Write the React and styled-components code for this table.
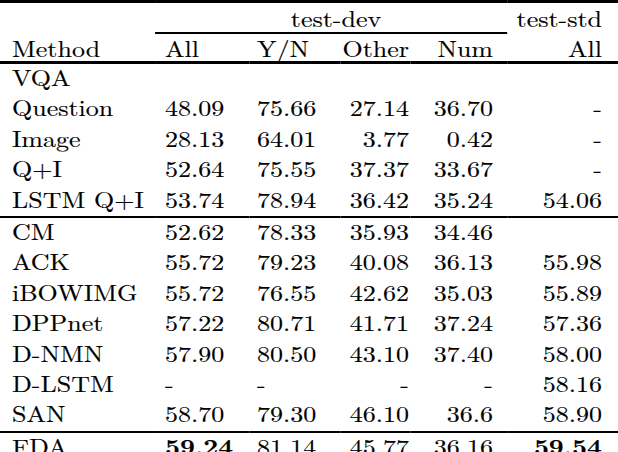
import React from 'react'
import styled, { createGlobalStyle } from 'styled-components'

const GlobalStyle = createGlobalStyle`
html, body {
  margin: 0;
  padding: 0;
  background: #fff;
  overflow: hidden;
}
body {
  width: 618px;
  height: 452px;
}
`

// the typeset table in the picture is stretched sideways a little
const SCALE = 1.166
const sx = px => (px / SCALE).toFixed(2)

// widths add up to the 618px window; pad is the gap on the aligned side
const columns = [
  { width: 155, align: 'left', pad: 12 },
  { width: 95, align: 'left', pad: 10 },
  { width: 90, align: 'left', pad: 7 },
  { width: 70, align: 'right', pad: 1 },
  { width: 97, align: 'right', pad: 14 },
  { width: 111, align: 'right', pad: 16 },
]

const groups = [
  [
    { name: 'VQA', values: ['', '', '', '', ''] },
    { name: 'Question', values: ['48.09', '75.66', '27.14', '36.70', '-'] },
    { name: 'Image', values: ['28.13', '64.01', '3.77', '0.42', '-'] },
    { name: 'Q+I', values: ['52.64', '75.55', '37.37', '33.67', '-'] },
    { name: 'LSTM Q+I', values: ['53.74', '78.94', '36.42', '35.24', '54.06'] },
  ],
  [
    { name: 'CM', values: ['52.62', '78.33', '35.93', '34.46', ''] },
    { name: 'ACK', values: ['55.72', '79.23', '40.08', '36.13', '55.98'] },
    { name: 'iBOWIMG', values: ['55.72', '76.55', '42.62', '35.03', '55.89'] },
    { name: 'DPPnet', values: ['57.22', '80.71', '41.71', '37.24', '57.36'] },
    { name: 'D-NMN', values: ['57.90', '80.50', '43.10', '37.40', '58.00'] },
    { name: 'D-LSTM', values: ['-', '-', '-', '-', '58.16'] },
    { name: 'SAN', values: ['58.70', '79.30', '46.10', '36.6', '58.90'] },
  ],
  [
    { name: 'FDA', values: ['59.24', '81.14', '45.77', '36.16', '59.54'], bold: [0, 4] },
  ],
]

const Table = styled.table`
width: ${sx(618)}px;
table-layout: fixed;
border-collapse: separate;
border-spacing: 0;
transform: scaleX(${SCALE});
transform-origin: 0 0;
font-family: "Latin Modern Roman", "Liberation Serif", serif;
font-size: 22.3px;
-webkit-text-stroke: 0.15px #000;
color: #000;
`

const Col = styled.col`
width: ${p => sx(p.$width)}px;
`

const BaseCell = styled.td`
padding: 0;
vertical-align: top;
white-space: nowrap;
text-align: ${p => columns[p.$col].align};
${p => columns[p.$col].align === 'left'
    ? `padding-left: ${sx(columns[p.$col].pad)}px;`
    : `padding-right: ${sx(columns[p.$col].pad)}px;`}
`

const GroupHead = styled(BaseCell)`
line-height: 29px;
border-top: 3px solid #000;
border-bottom: ${p => p.$underline ? '2px solid #000' : '0'};
text-align: ${p => p.$center ? 'center' : columns[p.$col].align};
`

const HeadCell = styled(BaseCell)`
line-height: 27px;
font-weight: 400;
border-bottom: 3px solid #000;
`

const Cell = styled(BaseCell)`
line-height: 26px;
padding-bottom: 4.4px;
border-top: ${p => p.$rule ? '2px solid #000' : '0'};
font-weight: ${p => p.$bold ? 700 : 400};
`

const headers = ['Method', 'All', 'Y/N', 'Other', 'Num', 'All']

export default function App() {
  return (
    <>
      <GlobalStyle />
      <Table>
        <colgroup>
          {columns.map((c, i) => <Col key={i} $width={c.width} />)}
        </colgroup>
        <thead>
          <tr>
            <GroupHead $col={0} />
            <GroupHead $col={1} colSpan={4} $center $underline>test-dev</GroupHead>
            <GroupHead $col={5}>test-std</GroupHead>
          </tr>
          <tr>
            {headers.map((h, i) => <HeadCell as="th" key={i} $col={i}>{h}</HeadCell>)}
          </tr>
        </thead>
        <tbody>
          {groups.map((rows, g) =>
            rows.map((row, r) => {
              const ruled = g > 0 && r === 0
              return (
                <tr key={row.name}>
                  <Cell $col={0} $rule={ruled}>{row.name}</Cell>
                  {row.values.map((v, i) => (
                    <Cell key={i} $col={i + 1} $rule={ruled} $bold={row.bold && row.bold.includes(i)}>{v}</Cell>
                  ))}
                </tr>
              )
            })
          )}
        </tbody>
      </Table>
    </>
  )
}
